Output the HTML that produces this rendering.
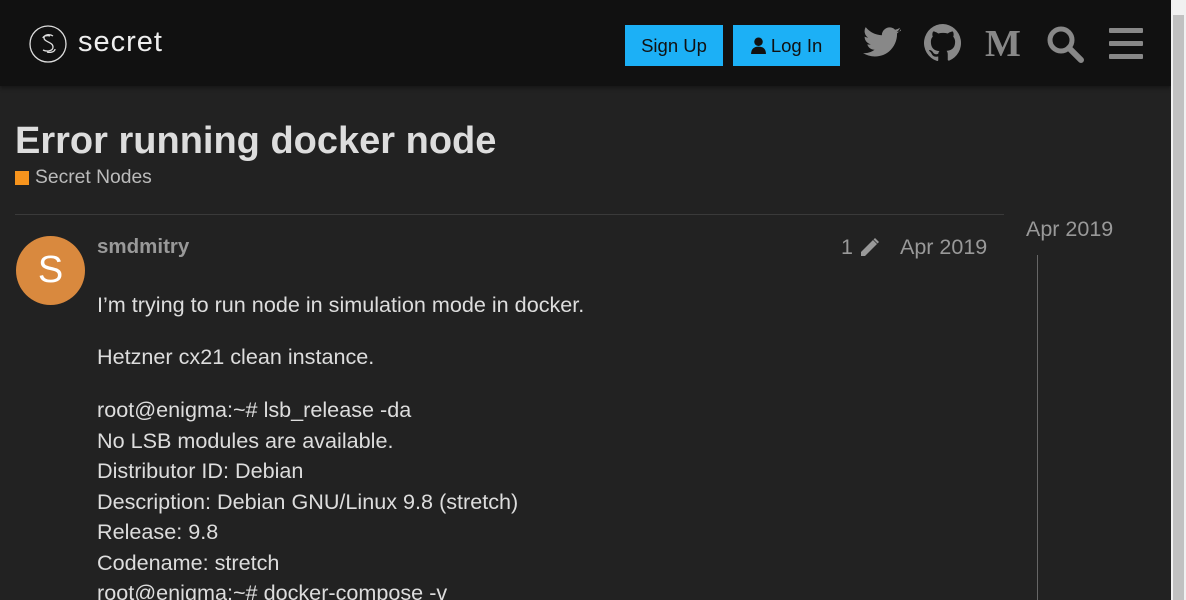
<!DOCTYPE html>
<html style="overflow:hidden;width:1186px;height:600px"><head><style>
body{margin:0;width:1186px;height:600px;overflow:hidden;background:#222;font-family:"Liberation Sans",sans-serif;position:relative}
.hdr{position:absolute;left:0;top:0;width:1171px;height:86px;background:#111;box-shadow:0 2px 4px rgba(0,0,0,.4)}
.sb{position:absolute;left:1171px;top:0;width:15px;height:600px;background:#f1f1f1}
.sb div{position:absolute;left:2px;top:15px;width:11px;height:585px;background:#c1c1c1}
.btn{position:absolute;top:25px;height:41px;background:#1cb0f6;color:#111;font-size:18.5px;line-height:41px;text-align:center}
.t{position:absolute;color:#ddd;white-space:nowrap}
.p{font-size:21.6px}
</style></head><body>
<div class="hdr">
<svg style="position:absolute;left:29px;top:24px" width="40" height="40" viewBox="0 0 40 40"><circle cx="19" cy="20" r="18" fill="none" stroke="#ddd" stroke-width="1.3"/><path d="M24 12c-3-2-9-2-9 2 0 4 9 4 9 9 0 4-6 5-10 3M21 12c-3-1-7 0-7 2M18 28c3 1 8 0 8-3" fill="none" stroke="#ddd" stroke-width="1.3"/></svg>
<div class="t" style="left:78px;top:26px;font-size:29px;color:#eee;letter-spacing:1px">secret</div>
<div class="btn" style="left:625px;width:98px">Sign Up</div>
<div class="btn" style="left:733px;width:107px"><svg width="15" height="17" viewBox="0 0 14 16" style="vertical-align:-2px"><circle cx="7" cy="4.5" r="4" fill="#111"/><path d="M0 16c0-5 3-7 7-7s7 2 7 7z" fill="#111"/></svg> Log In</div>
<svg style="position:absolute;left:863px;top:27px" width="38" height="32" viewBox="0 0 24 20"><path d="M24 2.3c-.9.4-1.8.7-2.8.8 1-.6 1.8-1.6 2.2-2.7-1 .6-2 1-3.1 1.2A4.9 4.9 0 0 0 11.9 5.1 14 14 0 0 1 1.7 0a4.9 4.9 0 0 0 1.5 6.6c-.8 0-1.600-.3-2.2-.6 0 2.4 1.7 4.4 3.9 4.8-.7.2-1.5.2-2.2.1.6 2 2.4 3.4 4.6 3.4A9.9 9.9 0 0 1 0 16.3 14 14 0 0 0 7.5 18.5c9.1 0 14-7.5 14-14v-.6c1-.7 1.8-1.6 2.5-2.6z" fill="#888"/></svg>
<svg style="position:absolute;left:924px;top:24px" width="38" height="38" viewBox="0 0 16 16"><path fill="#888" d="M8 0a8 8 0 0 0-2.5 15.6c.4 0 .5-.2.5-.4v-1.5c-2.200.5-2.7-1-2.7-1-.4-.9-.9-1.2-.9-1.2-.7-.5.1-.5.1-.5.8.1 1.2.8 1.2.8.7 1.3 1.9.9 2.3.7.1-.5.3-.9.5-1.1-1.8-.2-3.6-.9-3.6-4 0-.9.3-1.6.8-2.1-.1-.2-.4-1 .1-2.1 0 0 .7-.2 2.2.8a7.4 7.4 0 0 1 4 0c1.5-1 2.2-.8 2.2-.8.5 1.1.2 1.9.1 2.1.5.6.8 1.3.8 2.1 0 3.1-1.9 3.7-3.6 3.9.3.3.5.8.5 1.5v2.2c0 .2.1.5.6.4A8 8 0 0 0 8 0z"/></svg>
<div class="t" style="left:985px;top:22px;font:bold 38px 'Liberation Serif',serif;color:#888">M</div>
<svg style="position:absolute;left:1045px;top:24px" width="40" height="40" viewBox="0 0 40 40"><circle cx="16" cy="16" r="11" fill="none" stroke="#888" stroke-width="5"/><path d="M24 24l12 12" stroke="#888" stroke-width="6" stroke-linecap="round"/></svg>
<svg style="position:absolute;left:1109px;top:28px" width="34" height="31"><rect y="0" width="34" height="5" rx="1" fill="#888"/><rect y="13" width="34" height="5" rx="1" fill="#888"/><rect y="26" width="34" height="5" rx="1" fill="#888"/></svg>
</div>
<div class="sb"><div></div></div>
<div class="t" style="left:15px;top:120px;font-size:38px;font-weight:bold">Error running docker node</div>
<div style="position:absolute;left:15px;top:171px;width:14px;height:14px;background:#f7941d"></div>
<div class="t" style="left:35px;top:167px;font-size:19.3px;color:#bbb">Secret Nodes</div>
<div style="position:absolute;left:15px;top:214px;width:989px;height:1px;background:#3a3a3a"></div>
<div style="position:absolute;left:16px;top:236px;width:69px;height:69px;border-radius:50%;background:#d9893e;color:#fff;font-size:38px;text-align:center;line-height:69px">S</div>
<div class="t" style="left:97px;top:235px;font-size:20.5px;font-weight:bold;color:#999">smdmitry</div>
<div class="t" style="left:841px;top:235px;font-size:21.5px;color:#999">1</div>
<svg style="position:absolute;left:859px;top:236px" width="22" height="22" viewBox="0 0 22 22"><path d="M2 16l12-12 4 4-12 12H2z M16 2l4 4-1.5 1.5-4-4z" fill="#999"/></svg>
<div class="t" style="left:900px;top:235px;font-size:21.5px;color:#999">Apr 2019</div>
<div class="t" style="left:1026px;top:217px;font-size:21.5px;color:#999">Apr 2019</div>
<div style="position:absolute;left:1037px;top:255px;width:1px;height:345px;background:#666"></div>
<div class="t p" style="left:97px;top:292px;line-height:26px">I’m trying to run node in simulation mode in docker.</div>
<div class="t p" style="left:97px;top:344px;line-height:26px">Hetzner cx21 clean instance.</div>
<div class="t p" style="left:97px;top:395px;line-height:30.5px">root@enigma:~# lsb_release -da<br>No LSB modules are available.<br>Distributor ID: Debian<br>Description: Debian GNU/Linux 9.8 (stretch)<br>Release: 9.8<br>Codename: stretch<br>root@enigma:~# docker-compose -v</div>
</body></html>
